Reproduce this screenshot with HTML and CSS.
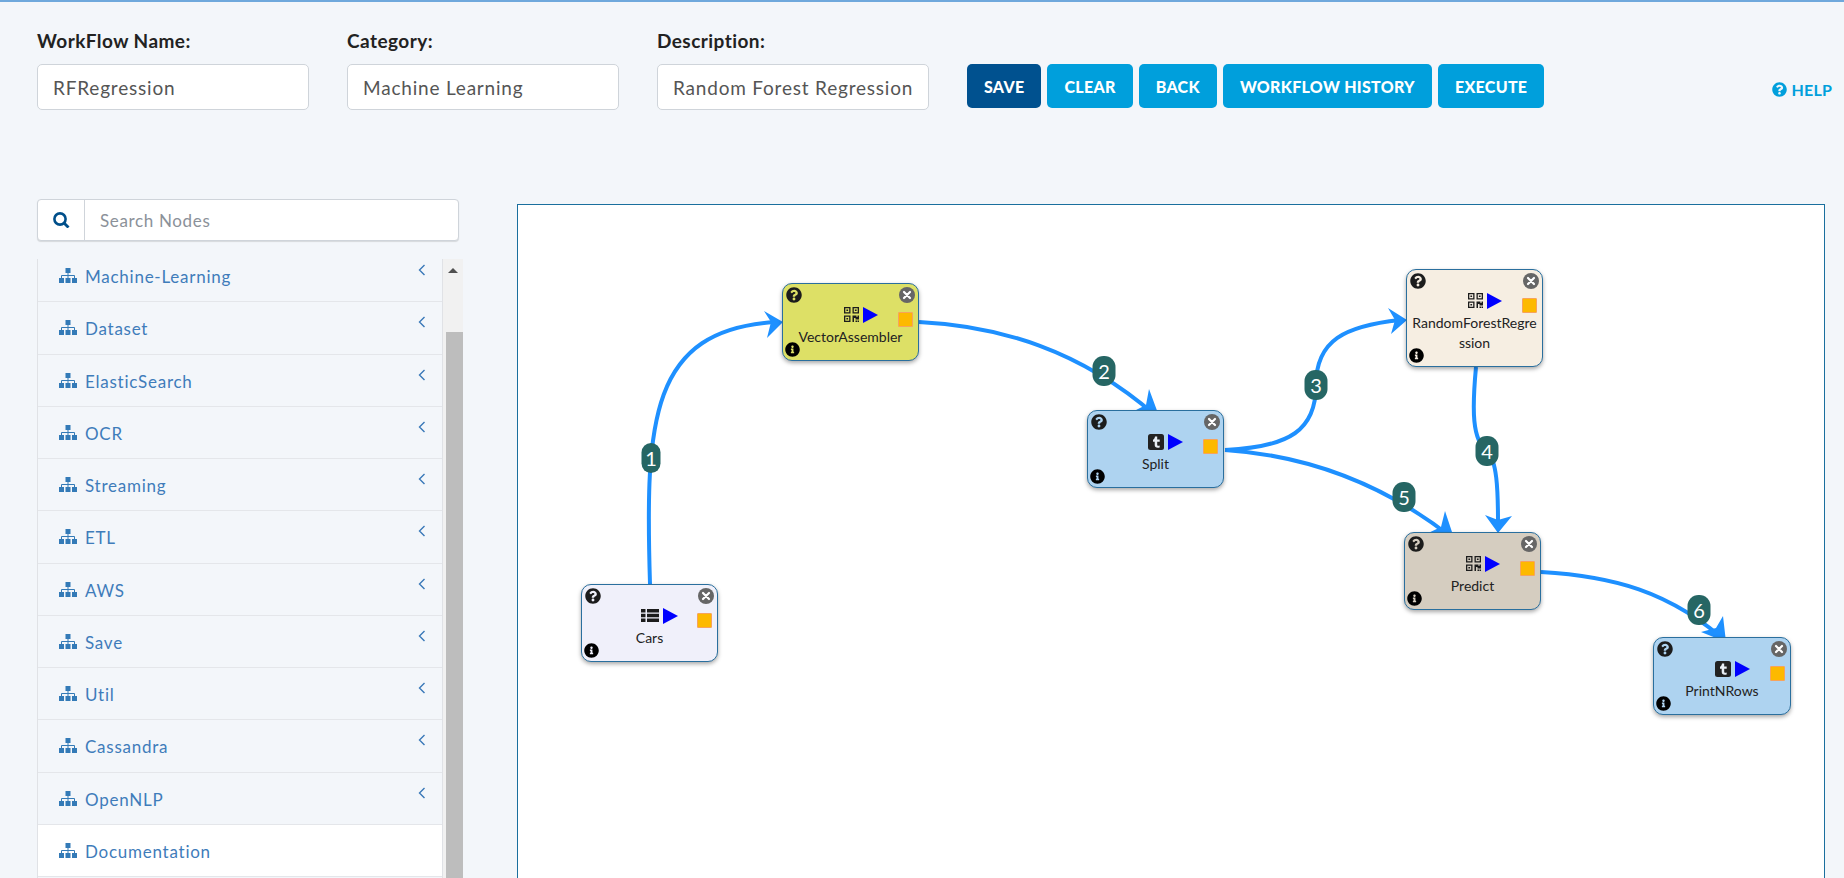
FILE: index.html

```html
<!DOCTYPE html>
<html lang="en">
<head>
  <meta charset="UTF-8" />
  <title>Workflow Editor</title>
  <link rel="stylesheet" href="styles.css">
</head>
<body>
  <svg class="icon-defs" width="0" height="0">
    <symbol id="i-question" viewBox="0 0 512 512"><path d="M504 256c0 136.997-111.043 248-248 248S8 392.997 8 256C8 119.083 119.043 8 256 8s248 111.083 248 248zM262.655 90c-54.497 0-89.255 22.957-116.549 63.758-3.536 5.286-2.353 12.415 2.715 16.258l34.699 26.31c5.205 3.947 12.621 3.008 16.665-2.122 17.864-22.658 30.113-35.797 57.303-35.797 20.429 0 45.698 13.148 45.698 32.958 0 14.976-12.363 22.667-32.534 33.976C247.128 238.528 216 254.941 216 296v4c0 6.627 5.373 12 12 12h56c6.627 0 12-5.373 12-12v-1.333c0-28.462 83.186-29.647 83.186-106.667 0-58.002-60.165-102-116.531-102zM256 338c-25.365 0-46 20.635-46 46 0 25.364 20.635 46 46 46s46-20.636 46-46c0-25.365-20.635-46-46-46z"/></symbol>
    <symbol id="i-info" viewBox="0 0 512 512"><path d="M256 8C119.043 8 8 119.083 8 256c0 136.997 111.043 248 248 248s248-111.003 248-248C504 119.083 392.957 8 256 8zm0 110c23.196 0 42 18.804 42 42s-18.804 42-42 42-42-18.804-42-42 18.804-42 42-42zm56 254c0 6.627-5.373 12-12 12h-88c-6.627 0-12-5.373-12-12v-24c0-6.627 5.373-12 12-12h12v-64h-12c-6.627 0-12-5.373-12-12v-24c0-6.627 5.373-12 12-12h64c6.627 0 12 5.373 12 12v100h12c6.627 0 12 5.373 12 12v24z"/></symbol>
    <symbol id="i-close" viewBox="0 0 16 16"><circle cx="8" cy="8" r="8" fill="#666"/><path d="M5 5l6 6M11 5l-6 6" stroke="#fff" stroke-width="2.2" stroke-linecap="round"/></symbol>
    <symbol id="i-sitemap" viewBox="0 0 18 15"><path d="M6.5 0h5v5h-5zM0 10h5v5H0zM6.5 10h5v5h-5zM13 10h5v5h-5z"/><path d="M9 5v5M2.5 10V7.5h13V10" fill="none" stroke="currentColor"/></symbol>
    <symbol id="i-chevron" viewBox="0 0 8 12"><path d="M6.5 1L1.5 6l5 5" fill="none" stroke="currentColor" stroke-width="1.4"/></symbol>
    <symbol id="i-play" viewBox="0 0 15 16"><path d="M0 0l15 8-15 8z" fill="#0000ff"/></symbol>
    <symbol id="i-qr" viewBox="0 0 15 15"><path d="M0 0h6.500v6.500H0zM1.300 1.300v3.900h3.900V1.300zM8.500 0H15v6.500H8.500zM9.800 1.300v3.900h3.900V1.300zM0 8.500h6.500V15H0zM1.300 9.800v3.900h3.900V9.800zM2.400 2.400h1.700v1.700H2.400zM10.900 2.400h1.700v1.700h-1.700zM2.400 10.900h1.700v1.700H2.400zM8.500 8.500h4v1.500h1v-1.500H15v4h-3.500v-1.500H10V15H8.500zM11.500 13.500H13V15h-1.500zM13.500 13.500H15V15h-1.500z" fill-rule="evenodd"/></symbol>
    <symbol id="i-list" viewBox="0 0 18 15"><path d="M0 1h4.500v3.500H0zM6 1h12v3.500H6zM0 5.800h4.500v3.500H0zM6 5.800h12v3.500H6zM0 10.600h4.500v3.500H0zM6 10.600h12v3.500H6z"/></symbol>
    <symbol id="i-tumblr" viewBox="0 0 16 16"><rect width="16" height="16" rx="2.500" fill="#222"/><path d="M7 2.600h2.200v2.900h2.500v2.200H9.200v3c0 .9.900 1.200 2.500.7v2.100c-3 .8-5-.1-5-2.500V7.700H5V5.800C6.200 5.400 6.800 4.200 7 2.600z" fill="#e8eef4"/></symbol>
  </svg>

  <header class="toolbar">
    <div class="field">
      <label>WorkFlow Name:</label>
      <input type="text" value="RFRegression" />
    </div>
    <div class="field">
      <label>Category:</label>
      <input type="text" value="Machine Learning" />
    </div>
    <div class="field">
      <label>Description:</label>
      <input type="text" value="Random Forest Regression" />
    </div>
    <div class="actions">
      <button class="btn btn-save">SAVE</button>
      <button class="btn">CLEAR</button>
      <button class="btn">BACK</button>
      <button class="btn">WORKFLOW HISTORY</button>
      <button class="btn">EXECUTE</button>
    </div>
    <a class="help" href="#"><svg class="help-icon"><use href="#i-question"/></svg>HELP</a>
  </header>

  <main class="workspace">
    <aside class="sidebar">
      <div class="search">
        <span class="search-btn">
          <svg width="18" height="16" viewBox="0 0 18 16"><circle cx="8" cy="7" r="5.600" fill="none" stroke="#004f8a" stroke-width="2.600"/><path d="M12 11l4.500 4.500" stroke="#004f8a" stroke-width="2.800"/></svg>
        </span>
        <input type="text" placeholder="Search Nodes" />
      </div>
      <div class="palette">
        <div class="palette-scroll">
          <ul class="palette-list">
            <li><svg class="tree"><use href="#i-sitemap"/></svg>Machine-Learning<svg class="chev"><use href="#i-chevron"/></svg></li>
            <li><svg class="tree"><use href="#i-sitemap"/></svg>Dataset<svg class="chev"><use href="#i-chevron"/></svg></li>
            <li><svg class="tree"><use href="#i-sitemap"/></svg>ElasticSearch<svg class="chev"><use href="#i-chevron"/></svg></li>
            <li><svg class="tree"><use href="#i-sitemap"/></svg>OCR<svg class="chev"><use href="#i-chevron"/></svg></li>
            <li><svg class="tree"><use href="#i-sitemap"/></svg>Streaming<svg class="chev"><use href="#i-chevron"/></svg></li>
            <li><svg class="tree"><use href="#i-sitemap"/></svg>ETL<svg class="chev"><use href="#i-chevron"/></svg></li>
            <li><svg class="tree"><use href="#i-sitemap"/></svg>AWS<svg class="chev"><use href="#i-chevron"/></svg></li>
            <li><svg class="tree"><use href="#i-sitemap"/></svg>Save<svg class="chev"><use href="#i-chevron"/></svg></li>
            <li><svg class="tree"><use href="#i-sitemap"/></svg>Util<svg class="chev"><use href="#i-chevron"/></svg></li>
            <li><svg class="tree"><use href="#i-sitemap"/></svg>Cassandra<svg class="chev"><use href="#i-chevron"/></svg></li>
            <li><svg class="tree"><use href="#i-sitemap"/></svg>OpenNLP<svg class="chev"><use href="#i-chevron"/></svg></li>
            <li class="plain"><svg class="tree"><use href="#i-sitemap"/></svg>Documentation</li>
          </ul>
        </div>
        <div class="scrollbar">
          <div class="scroll-track"><span class="scroll-up"></span></div>
          <div class="scroll-thumb"></div>
        </div>
      </div>
    </aside>

    <section class="canvas">
      <!-- viewBox uses page coordinates so the curves are easy to compare with the screen -->
      <svg class="edges" viewBox="518 205 1306 673" width="1306" height="673">
        <g class="edge-lines">
          <path d="M650 584C645 420 650 330 775 322"/>
          <path d="M919 322C1000 326 1080 350 1155 415"/>
          <path d="M1225 450C1290 447 1316 430 1316 385C1316 340 1345 326 1400 320"/>
          <path d="M1476 367C1472 410 1472 440 1487 451C1497 460 1498 490 1498 522"/>
          <path d="M1225 450C1300 455 1380 480 1455 540"/>
          <path d="M1541 572C1610 576 1670 590 1730 645"/>
        </g>
        <g class="edge-heads">
          <polygon points="764,311 783,322 767,338 771,322"/>
          <polygon points="1149,389 1159,416 1132,412 1146,405"/>
          <polygon points="1388,308 1407,320 1391,334 1395,320"/>
          <polygon points="1485,515 1498,533 1512,516 1498,520"/>
          <polygon points="1445,511 1454,538 1426,534 1441,527"/>
          <polygon points="1723,616 1726,642 1701,632 1716,628"/>
        </g>
      </svg>

      <span class="edge-label label-1">1</span>
      <span class="edge-label label-2">2</span>
      <span class="edge-label label-3">3</span>
      <span class="edge-label label-4">4</span>
      <span class="edge-label label-5">5</span>
      <span class="edge-label label-6">6</span>

      <div class="node node-cars">
        <svg class="node-q"><use href="#i-question"/></svg>
        <svg class="node-x"><use href="#i-close"/></svg>
        <span class="node-port"></span>
        <svg class="node-i"><use href="#i-info"/></svg>
        <div class="node-icons"><svg class="kind wide"><use href="#i-list"/></svg><svg class="play"><use href="#i-play"/></svg></div>
        <div class="node-name">Cars</div>
      </div>

      <div class="node node-vector">
        <svg class="node-q"><use href="#i-question"/></svg>
        <svg class="node-x"><use href="#i-close"/></svg>
        <span class="node-port"></span>
        <svg class="node-i"><use href="#i-info"/></svg>
        <div class="node-icons"><svg class="kind"><use href="#i-qr"/></svg><svg class="play"><use href="#i-play"/></svg></div>
        <div class="node-name">VectorAssembler</div>
      </div>

      <div class="node node-split">
        <svg class="node-q"><use href="#i-question"/></svg>
        <svg class="node-x"><use href="#i-close"/></svg>
        <span class="node-port"></span>
        <svg class="node-i"><use href="#i-info"/></svg>
        <div class="node-icons"><svg class="kind tall"><use href="#i-tumblr"/></svg><svg class="play"><use href="#i-play"/></svg></div>
        <div class="node-name">Split</div>
      </div>

      <div class="node node-forest">
        <svg class="node-q"><use href="#i-question"/></svg>
        <svg class="node-x"><use href="#i-close"/></svg>
        <span class="node-port"></span>
        <svg class="node-i"><use href="#i-info"/></svg>
        <div class="node-icons"><svg class="kind"><use href="#i-qr"/></svg><svg class="play"><use href="#i-play"/></svg></div>
        <div class="node-name">RandomForestRegression</div>
      </div>

      <div class="node node-predict">
        <svg class="node-q"><use href="#i-question"/></svg>
        <svg class="node-x"><use href="#i-close"/></svg>
        <span class="node-port"></span>
        <svg class="node-i"><use href="#i-info"/></svg>
        <div class="node-icons"><svg class="kind"><use href="#i-qr"/></svg><svg class="play"><use href="#i-play"/></svg></div>
        <div class="node-name">Predict</div>
      </div>

      <div class="node node-print">
        <svg class="node-q"><use href="#i-question"/></svg>
        <svg class="node-x"><use href="#i-close"/></svg>
        <span class="node-port"></span>
        <svg class="node-i"><use href="#i-info"/></svg>
        <div class="node-icons"><svg class="kind tall"><use href="#i-tumblr"/></svg><svg class="play"><use href="#i-play"/></svg></div>
        <div class="node-name">PrintNRows</div>
      </div>
    </section>
  </main>
</body>
</html>
```

FILE: styles.css

```css
* {
  box-sizing: border-box;
}

html, body {
  height: 100%;
}

body {
  margin: 0;
  overflow: hidden;
  display: flex;
  flex-direction: column;
  background: #f3f6fa;
  border-top: 2px solid #6fa8dc;
  font-family: "Lato", "Liberation Sans", sans-serif;
  color: #222;
}

.icon-defs {
  position: absolute;
}

/* top toolbar */
.toolbar {
  display: flex;
  align-items: flex-start;
  padding: 26px 12px 0 37px;
  height: 197px;
  flex-shrink: 0;
}

.field {
  width: 272px;
  margin-right: 38px;
  flex-shrink: 0;
}

.field label {
  display: block;
  height: 36px;
  line-height: 25px;
  font-size: 19px;
  font-weight: 700;
  letter-spacing: 0.45px;
  color: #222;
}

.field input {
  width: 100%;
  height: 46px;
  padding: 0 15px;
  background: #fff;
  border: 1px solid #cfd4da;
  border-radius: 5px;
  font: 19px "Lato", sans-serif;
  letter-spacing: 0.8px;
  color: #555;
}

.actions {
  display: flex;
  gap: 6px;
  margin-top: 36px;
}

.btn {
  height: 44px;
  padding: 0 17px;
  background: #009fdc;
  border: none;
  border-radius: 5px;
  font: 900 16px "Lato", sans-serif;
  letter-spacing: 0.3px;
  color: #fff;
}

.btn-save {
  background: #00518f;
}

.help {
  display: flex;
  align-items: center;
  gap: 4px;
  margin-left: auto;
  margin-top: 52px;
  font-size: 16px;
  font-weight: 700;
  letter-spacing: 0.2px;
  color: #009fdc;
  text-decoration: none;
}

.help-icon {
  width: 15px;
  height: 15px;
  fill: #009fdc;
}

/* sidebar and canvas */
.workspace {
  display: flex;
  align-items: flex-start;
  flex: 1;
  min-height: 0;
  padding-left: 37px;
}

.sidebar {
  width: 426px;
  margin-right: 54px;
  flex-shrink: 0;
}

.search {
  display: flex;
  width: 422px;
  height: 42px;
  background: #fff;
  border: 1px solid #cfd4da;
  border-radius: 4px;
  box-shadow: 0 1px 1px rgba(0, 0, 0, 0.12);
}

.search-btn {
  display: flex;
  align-items: center;
  justify-content: center;
  width: 47px;
  border-right: 1px solid #cfd4da;
}

.search input {
  flex: 1;
  min-width: 0;
  padding: 0 15px;
  border: none;
  background: none;
  font: 17px "Lato", sans-serif;
  letter-spacing: 0.65px;
}

.search input::placeholder {
  color: #8b9199;
  opacity: 1;
}

.palette {
  display: flex;
  height: 619px;
  margin-top: 18px;
  overflow: hidden;
}

.palette-scroll {
  width: 406px;
  overflow: hidden;
  border-left: 1px solid #e0e2e6;
  border-right: 1px solid #e0e2e6;
}

.palette-list {
  list-style: none;
  margin: -9px 0 0;
  padding: 0;
}

.palette-list li {
  display: flex;
  align-items: center;
  height: 52.25px;
  padding: 2px 0 0 21px;
  border-bottom: 1px solid #e4e6ea;
  font-size: 17px;
  letter-spacing: 0.75px;
  color: #3f7cba;
}

.palette-list li.plain {
  background: #fff;
}

.tree {
  width: 18px;
  height: 15px;
  margin-right: 8px;
  margin-top: -2px;
  fill: #337ab7;
  color: #337ab7;
}

.chev {
  width: 8px;
  height: 12px;
  margin-left: auto;
  margin-right: 16px;
  margin-bottom: 13px;
  color: #3a78b8;
}

.scrollbar {
  display: flex;
  flex-direction: column;
  width: 20px;
  background: #f1f1f1;
}

.scroll-track {
  display: flex;
  justify-content: center;
  height: 73px;
  padding-top: 9px;
}

.scroll-up {
  width: 0;
  height: 0;
  border-left: 5px solid transparent;
  border-right: 5px solid transparent;
  border-bottom: 5px solid #505050;
}

.scroll-thumb {
  flex: 1;
  margin-left: 3px;
  background: #bdbdbd;
}

.canvas {
  position: relative;
  width: 1308px;
  height: 700px;
  margin-top: 5px;
  background: #fff;
  border: 1px solid #1a6f9e;
  overflow: hidden;
  flex-shrink: 0;
}

.edges {
  position: absolute;
  left: 0;
  top: 0;
}

.edge-lines path {
  fill: none;
  stroke: #1e90ff;
  stroke-width: 4;
}

.edge-heads polygon {
  fill: #1e90ff;
}

.edge-label {
  position: absolute;
  transform: translate(-50%, -50%);
  width: 23px;
  height: 30px;
  line-height: 30px;
  border-radius: 11px;
  background: #266664;
  color: #fff;
  font-size: 20px;
  text-align: center;
}

.label-1 { left: 133px; top: 253px; width: 19px; }
.label-2 { left: 586px; top: 166px; }
.label-3 { left: 798px; top: 180px; }
.label-4 { left: 969px; top: 246px; }
.label-5 { left: 886px; top: 292px; }
.label-6 { left: 1181px; top: 405px; }

.node {
  position: absolute;
  width: 137px;
  height: 78px;
  padding-top: 23px;
  border: 1px solid #2a6f9e;
  border-radius: 10px;
  box-shadow: 0 2px 4px rgba(0, 0, 0, 0.35);
  text-align: center;
}

.node-cars { left: 63px; top: 379px; background: #f0f0fa; }
.node-vector { left: 264px; top: 78px; background: #dde066; }
.node-split { left: 569px; top: 205px; background: #aed3f0; }
.node-forest { left: 888px; top: 64px; height: 98px; background: #f6eee2; }
.node-predict { left: 886px; top: 327px; background: #d5cdc0; }
.node-print { left: 1135px; top: 432px; width: 138px; background: #aed3f0; }

.node-q,
.node-i,
.node-x {
  position: absolute;
  width: 16px;
  height: 16px;
}

.node-q { left: 3px; top: 3px; fill: #1c1c1c; }
.node-i { left: 2px; bottom: 3px; width: 15px; height: 15px; fill: #000; }
.node-x { right: 3px; top: 3px; }

.node-port {
  position: absolute;
  right: 5px;
  top: 28px;
  width: 15px;
  height: 15px;
  background: #fdb900;
  border: 1px solid #f7a35c;
  border-radius: 1px;
}

.node-icons {
  display: flex;
  justify-content: center;
  gap: 4px;
  height: 16px;
  padding-left: 20px;
}

.kind {
  width: 15px;
  height: 15px;
  fill: #1c1c1c;
}

.kind.wide {
  width: 18px;
}

.kind.tall {
  width: 16px;
  height: 16px;
}

.play {
  width: 15px;
  height: 16px;
}

.node-name {
  margin-top: 4px;
  padding: 0 5px;
  line-height: 20px;
  font-size: 14px;
  color: #222;
  word-break: break-all;
}
```
